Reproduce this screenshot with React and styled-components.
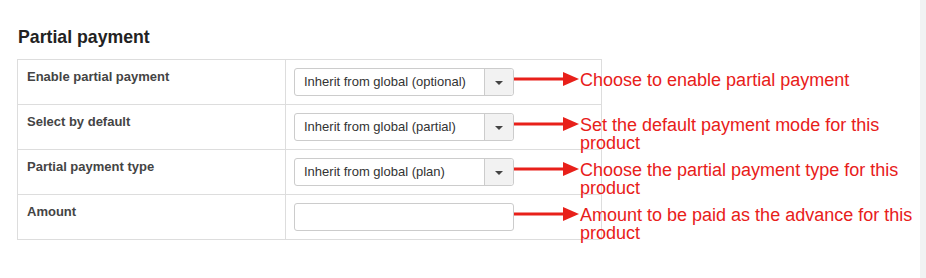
import React from 'react';
import styled, { createGlobalStyle } from 'styled-components';

const GlobalStyle = createGlobalStyle`
  html, body {
    margin: 0;
    padding: 0;
    background: #fff;
  }
  body {
    font-family: "Liberation Sans", Arial, sans-serif;
  }
`;

const Page = styled.div`
  display: flex;
  width: 926px;
  height: 278px;
  overflow: hidden;
`;

const Main = styled.div`
  flex: 1;
  padding: 26px 0 0 17px;
`;

const Scrollbar = styled.div`
  width: 6px;
  background: #f1f3f3;
`;

const Heading = styled.h3`
  margin: 0 0 11px 1px;
  font-size: 17.7px;
  line-height: 22px;
  font-weight: bold;
  color: #222;
`;

const Table = styled.div`
  width: 583px;
  border: 1px solid #ddd;
  border-bottom: none;
`;

const Row = styled.div`
  display: grid;
  grid-template-columns: 268px 1fr;
  height: 45px;
  border-bottom: 1px solid #ddd;
  box-sizing: border-box;
`;

const Label = styled.div`
  padding: 10px 9px;
  font-size: 13px;
  line-height: 14px;
  font-weight: bold;
  color: #444;
  border-right: 1px solid #ddd;
`;

const Field = styled.div`
  position: relative;
  padding: 8px 8px 0 8px;
`;

const SelectBox = styled.div`
  display: flex;
  width: 220px;
  height: 28px;
  box-sizing: border-box;
  border: 1px solid #ccc;
  border-radius: 3px;
  background: #fff;
`;

const SelectText = styled.div`
  flex: 1;
  padding-left: 9px;
  font-size: 13px;
  line-height: 26px;
  color: #333;
`;

const SelectButton = styled.div`
  width: 28px;
  display: flex;
  align-items: center;
  justify-content: center;
  background: #f2f2f2;
  border-left: 1px solid #ccc;
  border-radius: 0 3px 3px 0;
`;

const Caret = styled.span`
  width: 0;
  height: 0;
  border-left: 4px solid transparent;
  border-right: 4px solid transparent;
  border-top: 4px solid #444;
  margin-top: 1px;
`;

const TextInput = styled.div`
  width: 220px;
  height: 28px;
  box-sizing: border-box;
  border: 1px solid #ccc;
  border-radius: 3px;
  background: #fff;
`;

const Callout = styled.div`
  position: absolute;
  left: 228px;
  top: 11px;
  display: flex;
  align-items: flex-start;
  z-index: 2;
`;

const Arrow = styled.svg`
  flex: none;
`;

const Note = styled.div`
  width: 337px;
  margin-left: 1px;
  font-size: 18px;
  line-height: 18px;
  color: #e8201a;
`;

const rows = [
  { label: 'Enable partial payment', value: 'Inherit from global (optional)', note: 'Choose to enable partial payment' },
  { label: 'Select by default', value: 'Inherit from global (partial)', note: 'Set the default payment mode for this product' },
  { label: 'Partial payment type', value: 'Inherit from global (plan)', note: 'Choose the partial payment type for this product' },
  { label: 'Amount', value: null, note: 'Amount to be paid as the advance for this product' },
];

function ArrowIcon() {
  return (
    <Arrow width="65" height="16" viewBox="0 0 65 16">
      <rect x="0" y="6.5" width="52" height="3" fill="#e8201a" />
      <polygon points="49,1 65,8 49,15" fill="#e8201a" />
    </Arrow>
  );
}

export default function App() {
  return (
    <Page>
      <GlobalStyle />
      <Main>
        <Heading>Partial payment</Heading>
        <Table>
          {rows.map((r) => (
            <Row key={r.label}>
              <Label>{r.label}</Label>
              <Field>
                {r.value ? (
                  <SelectBox>
                    <SelectText>{r.value}</SelectText>
                    <SelectButton>
                      <Caret />
                    </SelectButton>
                  </SelectBox>
                ) : (
                  <TextInput />
                )}
                <Callout>
                  <ArrowIcon />
                  <Note>{r.note}</Note>
                </Callout>
              </Field>
            </Row>
          ))}
        </Table>
      </Main>
      <Scrollbar />
    </Page>
  );
}
